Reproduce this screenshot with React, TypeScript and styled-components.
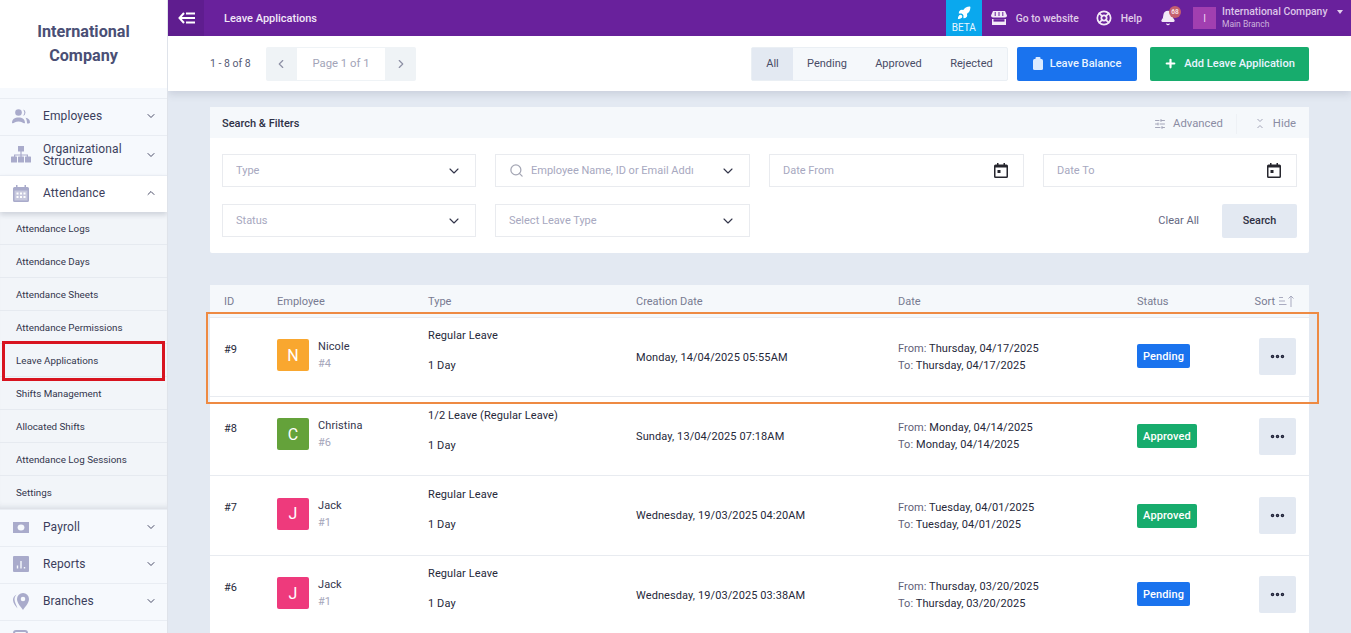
import React from "react";
import styled, { createGlobalStyle } from "styled-components";
import { ChevronDown, ChevronUp, ChevronLeft, ChevronRight, Search, Plus, Ellipsis, SlidersHorizontal, Rocket, LifeBuoy, Bell } from "lucide-react";

const Global = createGlobalStyle`
  html, body { margin: 0; padding: 0; height: 100%; overflow: hidden; }
  body { font-family: Roboto, "Liberation Sans", sans-serif; background: #e3e9f2; color: #2b2b3a; }
  * { box-sizing: border-box; }
`;

const Page = styled.div`display: flex; width: 1351px; height: 633px; overflow: hidden; position: relative;`;
const Side = styled.aside`width: 168px; flex: none; height: 633px; overflow: hidden; background: #f6f9fd; border-right: 1px solid #dfe3ea; z-index: 3; position: relative;`;
const Logo = styled.div`height: 88px; background: #fff; display: flex; align-items: center; justify-content: center; text-align: center; color: #4a4f75; font-size: 16.2px; line-height: 24px; font-weight: 700; padding: 0 20px; margin-bottom: 10px;`;
const MenuRow = styled.div<{ $h?: number; $open?: boolean }>`
  height: ${p => p.$h ?? 37}px; display: flex; align-items: center; padding: 0 10px 2px 10px; border-top: 1px solid #e9edf3;
  background: ${p => (p.$open ? "#fff" : "transparent")};
  box-shadow: ${p => (p.$open ? "0 3px 5px rgba(50,60,90,.18)" : "none")};
  position: relative; z-index: 1;
`;
const MenuIcon = styled.span`width: 21px; flex: none; display: flex; justify-content: center; margin-right: 12px; color: #a9abcb;`;
const MenuLabel = styled.span`flex: 1; font-size: 12px; line-height: 12px; font-weight: 400; color: #3b3e5c; letter-spacing: .1px;`;
const SubList = styled.div`background: #f2f5f9; height: 297px; box-shadow: inset 0 -6px 6px -5px rgba(50,60,90,.16);`;
const SubItem = styled.div`height: 33px; display: flex; align-items: center; padding-left: 16px; font-size: 9.8px; color: #33354d; border-bottom: 1px solid #e6eaf0; &:last-child { border-bottom: none; }`;
const RedMark = styled.div`position: absolute; left: 2px; top: 341px; width: 163px; height: 40px; border: 3px solid #d8131f; z-index: 5;`;
const OrangeMark = styled.div`position: absolute; left: 206px; top: 312px; width: 1113px; height: 92px; border: 2px solid #ee8a43; z-index: 5;`;

const Main = styled.main`flex: 1; min-width: 0; display: flex; flex-direction: column;`;
const TopBar = styled.header`height: 36px; flex: none; background: #69219c; display: flex; align-items: stretch; color: #fff;`;
const BackBtn = styled.div`width: 36px; background: #5f1d8f; display: flex; align-items: center; justify-content: center;`;
const PageTitle = styled.div`margin-left: 20px; font-size: 11px; font-weight: 500; align-self: center; flex: 1; color: #f1e7f7;`;
const Beta = styled.div`width: 36px; background: #0aa8ee; display: flex; flex-direction: column; align-items: center; justify-content: flex-end; font-size: 10px; line-height: 10px; padding-bottom: 3px; gap: 3px; color: #e8f6fe;`;
const TopLink = styled.div<{ $ml: number }>`margin-left: ${p => p.$ml}px; display: flex; align-items: center; gap: 9px; font-size: 10.3px; font-weight: 500; color: #e0cde9;`;
const BellWrap = styled.div`margin-left: 18px; width: 21px; position: relative; display: flex; align-items: center;`;
const BellBadge = styled.span`position: absolute; left: 9px; top: 6px; width: 12px; height: 12px; border-radius: 50%; background: #c4606e; font-size: 6.5px; font-weight: 700; color: #f5dfe4; display: flex; align-items: center; justify-content: center;`;
const UserTile = styled.div`margin-left: 12px; width: 23px; height: 22px; align-self: center; background: #a13fb0; font-size: 10px; color: #edd7f2; display: flex; align-items: center; justify-content: center;`;
const UserText = styled.div`margin: 0 8px 0 6px; align-self: center; width: 121px; position: relative;`;
const UserName = styled.div`font-size: 10.4px; line-height: 12px; font-weight: 500; color: #dcc5e8; white-space: nowrap;`;
const UserSub = styled.div`font-size: 8.5px; line-height: 12px; color: #cdb3dd;`;
const Caret = styled.span`position: absolute; right: 0; top: 4px; width: 0; height: 0; border: 3px solid transparent; border-top: 4px solid #e2cfec;`;

const SubBar = styled.div`height: 55px; flex: none; background: #fff; display: flex; align-items: center; padding: 0 42px 0 42px; box-shadow: 0 3px 8px rgba(60,70,100,.16); position: relative; z-index: 2;`;
const Count = styled.span`font-size: 10.5px; color: #565a74; width: 56px;`;
const Pager = styled.div`display: flex; height: 34px; background: #eff3f6; border-radius: 2px; align-items: stretch;`;
const PagerBtn = styled.span`width: 30px; display: flex; align-items: center; justify-content: center; color: #8d90a5;`;
const PagerText = styled.span`width: 90px; background: #fff; border: 1px solid #eff3f6; display: flex; align-items: center; justify-content: center; font-size: 11.3px; color: #a2a4b8;`;
const Spacer = styled.div`flex: 1;`;
const Tabs = styled.div`display: flex; height: 34px; background: #f5f8fb; border: 1px solid #eaeff4; border-radius: 2px;`;
const Tab = styled.span<{ $w: number; $on?: boolean }>`width: ${p => p.$w}px; display: flex; align-items: center; justify-content: center; font-size: 11px; color: #494c66; background: ${p => (p.$on ? "#e3e9f2" : "transparent")};`;
const ActionBtn = styled.div<{ $bg: string; $w: number; $ml: number }>`margin-left: ${p => p.$ml}px; width: ${p => p.$w}px; height: 34px; border-radius: 2px; background: ${p => p.$bg}; color: #e9f3ff; display: flex; align-items: center; justify-content: center; gap: 7px; font-size: 11.1px; font-weight: 500;`;

const Content = styled.div`flex: 1; min-height: 0; overflow: hidden; padding: 16px 42px 0;`;
const FilterCard = styled.section`background: #fff; height: 146px; border-radius: 2px;`;
const FilterHead = styled.div`height: 31px; background: #f5f8fb; display: flex; align-items: center; padding: 2px 13px 0 12px; font-size: 11px; font-weight: 500; color: #2f3146;`;
const HeadTool = styled.span<{ $ml?: number; $line?: boolean }>`display: flex; align-items: center; gap: ${p => (p.$line ? 9 : 7)}px; font-size: 11.3px; font-weight: 400; color: #8a8ca3; margin-left: ${p => p.$ml ?? 0}px; ${p => p.$line ? "border-left: 1px solid #eef1f5; padding-left: 19px; height: 20px;" : ""}`;
const FilterGrid = styled.div`display: grid; grid-template-columns: 254px 255px 255px 254px; column-gap: 19px; row-gap: 17px; padding: 16px 12px 0;`;
const Field = styled.div`height: 33px; border: 1px solid #e9ebef; display: flex; align-items: center; padding: 0 15px 0 13px; font-size: 11px; color: #a7a8c0; gap: 7px; overflow: hidden;`;
const FieldText = styled.span`flex: 1; white-space: nowrap; overflow: hidden;`;
const FieldCaret = styled(ChevronDown)`margin-right: -2px; flex: none;`;
const FilterActions = styled.div`grid-column: 3 / 5; display: flex; justify-content: flex-end; align-items: center;`;
const ClearAll = styled.span`font-size: 11px; color: #64677f; margin-right: 23px; padding-bottom: 2px;`;
const SearchBtn = styled.span`width: 75px; height: 34px; background: #e3e9f2; border-radius: 2px; color: #2d2f42; font-size: 10.8px; font-weight: 500; display: flex; align-items: center; justify-content: center; padding-bottom: 2px;`;

const Table = styled.section`margin-top: 32px; background: #fff;`;
const cols = "53px 151px 208px 262px 239px 1fr";
const HeadRow = styled.div`height: 32px; background: #f5f8fb; display: grid; grid-template-columns: ${cols}; align-items: center; padding: 0 13px 0 14px; font-size: 11px; color: #787b92;`;
const SortCell = styled.span`display: flex; justify-content: space-between; align-items: center;`;
const SortLabel = styled.span`display: flex; align-items: center; gap: 3px; margin-right: 1px;`;
const Row = styled.div<{ $h: number }>`height: ${p => p.$h}px; display: grid; grid-template-columns: ${cols}; align-items: center; padding: 0 13px 0 14px; border-top: 1px solid #e8ebf0; font-size: 11px; letter-spacing: .1px; color: #26283a;`;
const IdCell = styled.span`margin-top: -16px;`;
const Emp = styled.div`display: flex; align-items: center; gap: 9px; margin-top: -4px;`;
const Avatar = styled.span<{ $c: string }>`width: 32px; height: 32px; border-radius: 2px; background: ${p => p.$c}; color: #fff; font-size: 16px; display: flex; align-items: center; justify-content: center;`;
const EmpName = styled.div`line-height: 17px; color: #33354c;`;
const EmpId = styled.div`line-height: 17px; color: #a5a6ba;`;
const TypeCell = styled.div<{ $shift: number }>`display: flex; flex-direction: column; gap: 17px; line-height: 13px; margin-top: ${p => p.$shift}px; white-space: nowrap;`;
const Range = styled.div`line-height: 17px; white-space: nowrap; letter-spacing: .07px;`;
const RangeKey = styled.span`color: #5f6178;`;
const StatusCell = styled.div<{ $shift: number }>`display: flex; justify-content: space-between; align-items: center; margin-top: ${p => p.$shift}px;`;
const Pill = styled.span<{ $c: string; $w: number }>`width: ${p => p.$w}px; height: 24px; border-radius: 2px; background: ${p => p.$c}; color: #fff; font-size: 11px; font-weight: 500; display: flex; align-items: center; justify-content: center;`;
const MoreBtn = styled.span`width: 37px; height: 37px; border-radius: 2px; background: #e3e9f2; color: #22243a; display: flex; align-items: center; justify-content: center;`;

const BackIcon = () => (
  <svg width="17" height="12" viewBox="0 0 17 12" fill="none" stroke="#fff" strokeWidth="2">
    <path d="M6 1 1.500 6 6 11M2 6h15M8 1.500h9M8 10.500h9" />
  </svg>
);
const StoreIcon = () => (
  <svg width="16" height="14" viewBox="0 0 16 14" fill="#f3e9f7">
    <path d="M2 0h12l2 4.500a2 2 0 0 1-2 2H2a2 2 0 0 1-2-2zM1 8h14v6H1z" />
    <path d="M4.200 1v4M8 1v4M11.800 1v4" stroke="#69219c" strokeWidth="1" />
    <rect x="2.500" y="8.200" width="11" height="2.400" fill="#69219c" />
  </svg>
);
const PeopleIcon = () => (
  <svg width="18" height="15" viewBox="0 0 18 15" fill="currentColor">
    <circle cx="6.500" cy="3.500" r="3.300" /><path d="M11 .4a3.300 3.300 0 0 1 0 6.400 5 5 0 0 0 0-6.400z" />
    <path d="M0 14c0-3.800 2.800-5.500 6.500-5.500S13 10.200 13 14c-1.500 1-3-1.500-6.500-1.500S1.500 15 0 14zM13.500 8.800c2.800.3 4.500 2 4.500 4.700 0 1-1.800 1-3 1 0-2-.3-4-1.500-5.700z" />
  </svg>
);
const OrgIcon = () => (
  <svg width="20" height="17" viewBox="0 0 20 17" fill="currentColor">
    <rect x="7" y="0" width="6" height="5.500" /><path d="M9.400 5h1.200v3.500H17V11h-1.200V9.600h-5.200V11H9.400V9.600H4.200V11H3V8.500h6.400z" />
    <rect x="0" y="10.500" width="6" height="6" rx=".6" /><rect x="7" y="10.500" width="6" height="6" rx=".6" /><rect x="14" y="10.500" width="6" height="6" rx=".6" />
  </svg>
);
const CalIcon = () => (
  <svg width="16" height="17" viewBox="0 0 16 17" fill="currentColor">
    <path d="M3 0h1.500v2h7V0H13v2h1.500A1.500 1.500 0 0 1 16 3.500V15.500A1.500 1.500 0 0 1 14.500 17h-13A1.500 1.500 0 0 1 0 15.500V3.500A1.500 1.500 0 0 1 1.500 2H3z" />
    <rect x="1.500" y="5.500" width="13" height="10" fill="#fff" opacity=".35" />
    <path d="M3.500 7.500h2v2h-2zM7 7.500h2v2H7zM10.500 7.500h2v2h-2zM3.500 11h2v2h-2zM7 11h2v2H7zM10.500 11h2v2h-2z" fill="#fff" />
  </svg>
);
const PayIcon = () => (
  <svg width="16" height="11" viewBox="0 0 16 11"><rect width="16" height="11" fill="currentColor" /><ellipse cx="8" cy="5.500" rx="3.400" ry="3" fill="#f6f9fd" /></svg>
);
const ReportIcon = () => (
  <svg width="16" height="16" viewBox="0 0 16 16"><rect width="16" height="16" rx="1" fill="currentColor" /><path d="M4.500 9.500v3M8 5v7.500M11.500 11v1.500" stroke="#f6f9fd" strokeWidth="1.400" /></svg>
);
const PinIcon = () => (
  <svg width="16" height="17" viewBox="0 0 16 17" fill="currentColor">
    <path d="M10 0a6 6 0 0 1 6 6c0 4-4 8-6 11-2-3-6-7-6-11a6 6 0 0 1 6-6zm0 3.700a2.300 2.300 0 1 0 0 4.600 2.300 2.300 0 0 0 0-4.600z" fillRule="evenodd" />
    <path d="M3.500 1.500C1 3 0 5 0 7c0 3 2.500 6 4.500 8.500C3.500 12 1.500 9 1.500 6.500c0-2 .8-3.500 2-5z" />
  </svg>
);
const DocIcon = () => (
  <svg width="16" height="17" viewBox="0 0 16 17"><rect x="1" y="1" width="13" height="15" rx="2" fill="none" stroke="currentColor" strokeWidth="2" /></svg>
);
const DateIcon = () => (
  <svg width="14" height="15" viewBox="0 0 14 15" fill="#26262e">
    <path d="M3 0h1.500v1.500h5V0H11v1.500h1.500A1.500 1.500 0 0 1 14 3v10.500a1.500 1.500 0 0 1-1.500 1.500h-11A1.500 1.500 0 0 1 0 13.500V3a1.500 1.500 0 0 1 1.500-1.500H3z" />
    <rect x="1.500" y="4.500" width="11" height="9" fill="#fff" /><rect x="3.500" y="7" width="3" height="3" />
  </svg>
);
const ClipIcon = () => (
  <svg width="10" height="13" viewBox="0 0 10 13" fill="#dcebff">
    <rect x="0" y="2" width="10" height="11" rx="1.500" /><rect x="2.500" y="0" width="5" height="3" rx="1" />
  </svg>
);
const HideIcon = () => (
  <svg width="8" height="11" viewBox="0 0 8 11" fill="none" stroke="#a4a6b9" strokeWidth="1"><path d="M1.500 1 4 3.500 6.500 1M1.500 10 4 7.500 6.500 10" /></svg>
);
const SortIcon = () => (
  <svg width="17" height="12" viewBox="0 0 17 12" fill="none" stroke="#a9abc0" strokeWidth="1"><path d="M1 2.500h4M1 6h6M1 9.500h7.500M13 12V1M10.500 3.500 13 1l2.500 2.500" /></svg>
);

const Chev = () => <ChevronDown size={12} strokeWidth={2} color="#4a4d68" />;
const FieldChev = () => <FieldCaret size={16} strokeWidth={1.7} color="#33354a" />;

const subs = ["Attendance Logs", "Attendance Days", "Attendance Sheets", "Attendance Permissions", "Leave Applications", "Shifts Management", "Allocated Shifts", "Attendance Log Sessions", "Settings"];
const rows = [
  { h: 79, id: "#9", c: "#f9a72f", l: "N", name: "Nicole", eid: "#4", type: "Regular Leave", ts: -14, ss: -2, created: "Monday, 14/04/2025 05:55AM", from: "Thursday, 04/17/2025", to: "Thursday, 04/17/2025", st: "Pending" },
  { h: 79, id: "#8", c: "#64a23a", l: "C", name: "Christina", eid: "#6", type: "1/2 Leave (Regular Leave)", ts: -11, ss: 0, created: "Sunday, 13/04/2025 07:18AM", from: "Monday, 04/14/2025", to: "Monday, 04/14/2025", st: "Approved" },
  { h: 80, id: "#7", c: "#ee3a7c", l: "J", name: "Jack", eid: "#1", type: "Regular Leave", ts: -12, ss: 0, created: "Wednesday, 19/03/2025 04:20AM", from: "Tuesday, 04/01/2025", to: "Tuesday, 04/01/2025", st: "Approved" },
  { h: 79, id: "#6", c: "#ee3a7c", l: "J", name: "Jack", eid: "#1", type: "Regular Leave", ts: -14, ss: -2, created: "Wednesday, 19/03/2025 03:38AM", from: "Thursday, 03/20/2025", to: "Thursday, 03/20/2025", st: "Pending" },
];

export default function App() {
  return (
    <Page>
      <Global />
      <Side>
        <Logo>International Company</Logo>
        <MenuRow><MenuIcon><PeopleIcon /></MenuIcon><MenuLabel>Employees</MenuLabel><Chev /></MenuRow>
        <MenuRow $h={40}><MenuIcon><OrgIcon /></MenuIcon><MenuLabel>Organizational Structure</MenuLabel><Chev /></MenuRow>
        <MenuRow $open><MenuIcon><CalIcon /></MenuIcon><MenuLabel>Attendance</MenuLabel><ChevronUp size={12} strokeWidth={2} color="#4a4d68" /></MenuRow>
        <SubList>{subs.map(s => <SubItem key={s}>{s}</SubItem>)}</SubList>
        <MenuRow><MenuIcon><PayIcon /></MenuIcon><MenuLabel>Payroll</MenuLabel><Chev /></MenuRow>
        <MenuRow><MenuIcon><ReportIcon /></MenuIcon><MenuLabel>Reports</MenuLabel><Chev /></MenuRow>
        <MenuRow><MenuIcon><PinIcon /></MenuIcon><MenuLabel>Branches</MenuLabel><Chev /></MenuRow>
        <MenuRow><MenuIcon><DocIcon /></MenuIcon></MenuRow>
      </Side>
      <Main>
        <TopBar>
          <BackBtn><BackIcon /></BackBtn>
          <PageTitle>Leave Applications</PageTitle>
          <Beta><Rocket size={14} fill="#fff" color="#fff" />BETA</Beta>
          <TopLink $ml={9}><StoreIcon />Go to website</TopLink>
          <TopLink $ml={17}><LifeBuoy size={16} strokeWidth={2.6} color="#f3e9f7" />Help</TopLink>
          <BellWrap><Bell size={16} fill="#f3e9f7" color="#f3e9f7" /><BellBadge>68</BellBadge></BellWrap>
          <UserTile>I</UserTile>
          <UserText><UserName>International Company</UserName><UserSub>Main Branch</UserSub><Caret /></UserText>
        </TopBar>
        <SubBar>
          <Count>1 - 8 of 8</Count>
          <Pager>
            <PagerBtn><ChevronLeft size={14} /></PagerBtn>
            <PagerText>Page 1 of 1</PagerText>
            <PagerBtn><ChevronRight size={14} /></PagerBtn>
          </Pager>
          <Spacer />
          <Tabs>
            <Tab $w={41} $on>All</Tab><Tab $w={68}>Pending</Tab><Tab $w={75}>Approved</Tab><Tab $w={71}>Rejected</Tab>
          </Tabs>
          <ActionBtn $bg="#1a73ee" $w={120} $ml={9}><ClipIcon />Leave Balance</ActionBtn>
          <ActionBtn $bg="#17ac6d" $w={159} $ml={13}><Plus size={13} strokeWidth={4} color="#fff" />Add Leave Application</ActionBtn>
        </SubBar>
        <Content>
          <FilterCard>
            <FilterHead>
              Search &amp; Filters<Spacer />
              <HeadTool><SlidersHorizontal size={12} color="#a4a6b9" />Advanced</HeadTool>
              <HeadTool $ml={13} $line><HideIcon />Hide</HeadTool>
            </FilterHead>
            <FilterGrid>
              <Field><FieldText>Type</FieldText><FieldChev /></Field>
              <Field><Search size={15} color="#a4a6b4" /><FieldText>Employee Name, ID or Email Addı</FieldText><FieldChev /></Field>
              <Field><FieldText>Date From</FieldText><DateIcon /></Field>
              <Field><FieldText>Date To</FieldText><DateIcon /></Field>
              <Field><FieldText>Status</FieldText><FieldChev /></Field>
              <Field><FieldText>Select Leave Type</FieldText><FieldChev /></Field>
              <FilterActions><ClearAll>Clear All</ClearAll><SearchBtn>Search</SearchBtn></FilterActions>
            </FilterGrid>
          </FilterCard>
          <Table>
            <HeadRow>
              <span>ID</span><span>Employee</span><span>Type</span><span>Creation Date</span><span>Date</span>
              <SortCell><span>Status</span><SortLabel>Sort<SortIcon /></SortLabel></SortCell>
            </HeadRow>
            {rows.map(r => (
              <Row key={r.id} $h={r.h}>
                <IdCell>{r.id}</IdCell>
                <Emp>
                  <Avatar $c={r.c}>{r.l}</Avatar>
                  <div><EmpName>{r.name}</EmpName><EmpId>{r.eid}</EmpId></div>
                </Emp>
                <TypeCell $shift={r.ts}><span>{r.type}</span><span>1 Day</span></TypeCell>
                <span>{r.created}</span>
                <div>
                  <Range><RangeKey>From: </RangeKey>{r.from}</Range>
                  <Range><RangeKey>To: </RangeKey>{r.to}</Range>
                </div>
                <StatusCell $shift={r.ss}>
                  <Pill $c={r.st === "Pending" ? "#1a73ee" : "#17ac6d"} $w={r.st === "Pending" ? 53 : 60}>{r.st}</Pill>
                  <MoreBtn><Ellipsis size={17} strokeWidth={3} /></MoreBtn>
                </StatusCell>
              </Row>
            ))}
          </Table>
        </Content>
      </Main>
      <RedMark />
      <OrangeMark />
    </Page>
  );
}
